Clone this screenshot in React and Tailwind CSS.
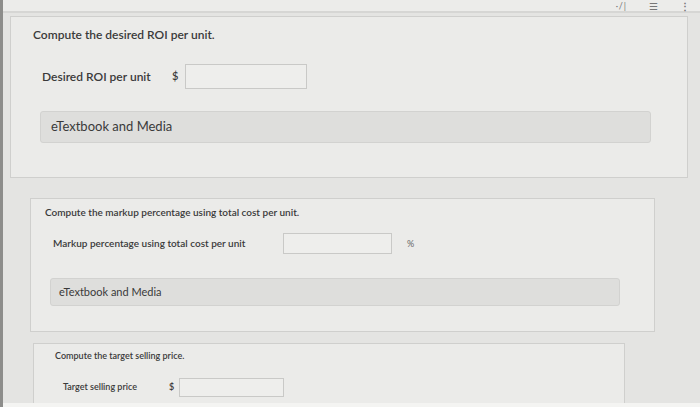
const font = { fontFamily: "Lato, 'Open Sans', sans-serif" };

const Input = ({ className }) => (
  <div className={`border border-[#c9c9c7] bg-[#eeeeec] ${className}`} />
);

export default function App() {
  return (
    <div
      className="w-[700px] h-[407px] overflow-hidden bg-[#e4e4e2] border-l-[3px] border-[#8d8d8b] flex flex-col text-[#3a3a3a]"
      style={font}
    >
      <div className="h-[13px] shrink-0 bg-[#ececea] border-b-2 border-[#d6d6d4] flex items-center justify-end gap-[22px] pr-[10px] text-[#777]">
        <span className="text-[9px] leading-[10px] tracking-widest">·/|</span>
        <span className="text-[10px] leading-[10px]">☰</span>
        <span className="text-[10px] leading-[10px] font-bold">⋮</span>
      </div>

      <div className="ml-[7px] mr-[12px] mt-[3px] h-[162px] shrink-0 border border-[#cfcfcd] bg-[#ebebe9] pl-[22px] pt-[9px] pr-[36px]">
        <p className="text-[12px] font-semibold">Compute the desired ROI per unit.</p>
        <div className="mt-[20px] flex items-center pl-[9px]">
          <span className="text-[12px] font-semibold w-[130px]">Desired ROI per unit</span>
          <span className="text-[11px] font-semibold w-[13px]">$</span>
          <Input className="w-[122px] h-[25px]" />
        </div>
        <div className="mt-[22px] ml-[7px] h-[32px] bg-[#dededc] border border-[#d2d2d0] rounded-[3px] flex items-center pl-[10px]">
          <span className="text-[13px]">eTextbook and Media</span>
        </div>
      </div>

      <div className="ml-[27px] mr-[45px] mt-[20px] h-[134px] shrink-0 border border-[#cfcfcd] bg-[#ebebe9] pl-[14px] pt-[6px] pr-[34px]">
        <p className="text-[10px] font-semibold">Compute the markup percentage using total cost per unit.</p>
        <div className="mt-[13px] flex items-center pl-[8px]">
          <span className="text-[10px] font-semibold w-[230px]">Markup percentage using total cost per unit</span>
          <Input className="w-[109px] h-[21px]" />
          <span className="text-[9px] ml-[15px] text-[#666]">%</span>
        </div>
        <div className="mt-[24px] ml-[5px] h-[28px] bg-[#dededc] border border-[#d2d2d0] rounded-[3px] flex items-center pl-[8px]">
          <span className="text-[11px]">eTextbook and Media</span>
        </div>
      </div>

      <div className="ml-[30px] mr-[75px] mt-[11px] flex-1 border border-[#cfcfcd] border-b-0 bg-[#ebebe9] pl-[21px] pt-[5px]">
        <p className="text-[9px] font-semibold">Compute the target selling price.</p>
        <div className="mt-[15px] flex items-center pl-[8px]">
          <span className="text-[9px] font-semibold w-[106px]">Target selling price</span>
          <span className="text-[9px] font-semibold w-[10px]">$</span>
          <Input className="w-[105px] h-[19px]" />
        </div>
      </div>
      <div className="h-[4px] shrink-0 bg-[#f4f4f2]" />
    </div>
  );
}
